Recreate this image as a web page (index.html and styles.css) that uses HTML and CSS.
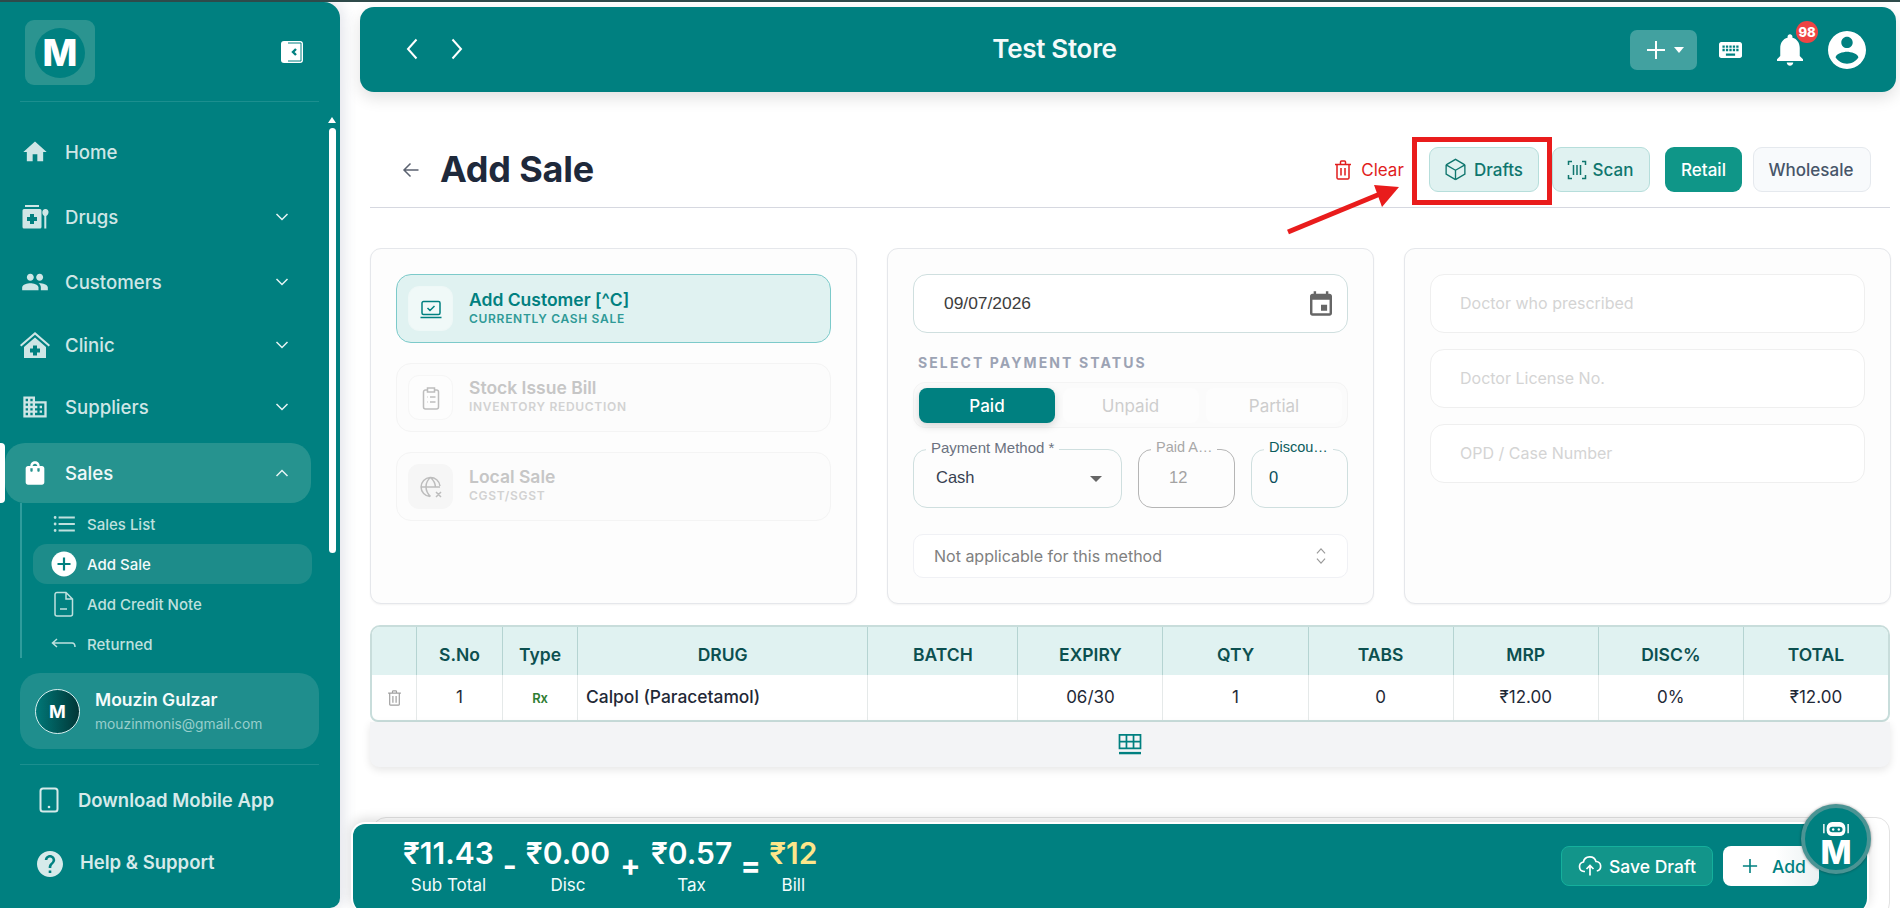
FILE: index.html
```html
<!DOCTYPE html>
<html lang="en">
<head>
<meta charset="utf-8">
<title>Add Sale</title>
<link rel="stylesheet" href="styles.css">
</head>
<body>
<div class="strip"></div>
<div class="app">
  <aside class="sidebar">
    <div class="side-head">
      <div class="logo"><span class="logo-disc">M</span></div>
      <svg class="collapse" viewBox="0 0 24 24"><rect x="1" y="1" width="22" height="22" rx="3" fill="#fff"/><path d="M8 3h13v18H8" fill="none" stroke="#008080" stroke-width="1"/><path d="M16 9l-3 3 3 3" fill="none" stroke="#008080" stroke-width="2.4"/></svg>
    </div>
    <nav class="nav">
      <a class="nav-item mb5"><svg class="nav-ic" viewBox="0 0 24 24"><path d="M10 20v-6h4v6h5v-8h3L12 3 2 12h3v8z"/></svg><span>Home</span></a>
      <a class="nav-item mb5"><svg class="nav-ic" viewBox="0 0 28 28"><path d="M4 2h14v2H4zM3 6h16a1.500 1.500 0 0 1 1.500 1.500V24a1.500 1.500 0 0 1-1.500 1.500H3A1.500 1.500 0 0 1 1.500 24V7.500A1.500 1.500 0 0 1 3 6zm6 5v3H6v4h3v3h4v-3h3v-4h-3v-3z"/><path d="M24.500 6a3 3 0 0 1 3 3.500c-.2 1.800-1.300 3-2.200 3.400V25.500h-2V12.900c-.9-.4-2-1.600-2-3.400a3.200 3.200 0 0 1 3.200-3.500z"/></svg><span>Drugs</span><svg class="chev" viewBox="0 0 14 8"><path d="M1.500 1l5.500 5.500L12.500 1"/></svg></a>
      <a class="nav-item mb3"><svg class="nav-ic" viewBox="0 0 24 24"><path d="M16 11c1.660 0 2.990-1.340 2.990-3S17.660 5 16 5c-1.660 0-3 1.340-3 3s1.340 3 3 3zm-8 0c1.660 0 2.990-1.340 2.990-3S9.660 5 8 5C6.340 5 5 6.340 5 8s1.340 3 3 3zm0 2c-2.330 0-7 1.170-7 3.500V19h14v-2.500c0-2.330-4.670-3.500-7-3.500zm8 0c-.29 0-.62.02-.97.05 1.160.84 1.970 1.970 1.970 3.450V19h6v-2.500c0-2.330-4.670-3.500-7-3.500z"/></svg><span>Customers</span><svg class="chev" viewBox="0 0 14 8"><path d="M1.500 1l5.500 5.500L12.500 1"/></svg></a>
      <a class="nav-item mb2"><svg class="nav-ic big" viewBox="0 0 30 28"><path d="M15 1L0 14l1.300 1.600L15 3.800l13.700 11.800L30 14z"/><path d="M15 6.500L4 16v11h22V16zm-2 8h4v3h3v4h-3v3h-4v-3h-3v-4h3z"/></svg><span>Clinic</span><svg class="chev" viewBox="0 0 14 8"><path d="M1.500 1l5.500 5.500L12.500 1"/></svg></a>
      <a class="nav-item"><svg class="nav-ic" viewBox="0 0 24 24"><path d="M12 7V3H2v18h20V7H12zM6 19H4v-2h2v2zm0-4H4v-2h2v2zm0-4H4V9h2v2zm0-4H4V5h2v2zm4 12H8v-2h2v2zm0-4H8v-2h2v2zm0-4H8V9h2v2zm0-4H8V5h2v2zm10 12h-8v-2h2v-2h-2v-2h2v-2h-2V9h8v10zm-2-8h-2v2h2v-2zm0 4h-2v2h2v-2z"/></svg><span>Suppliers</span><svg class="chev" viewBox="0 0 14 8"><path d="M1.500 1l5.500 5.500L12.500 1"/></svg></a>
      <a class="nav-item active mt6"><svg class="nav-ic" viewBox="0 0 24 24"><path d="M18 6h-2c0-2.210-1.790-4-4-4S8 3.790 8 6H6c-1.100 0-2 .9-2 2v12c0 1.100.9 2 2 2h12c1.100 0 2-.9 2-2V8c0-1.100-.9-2-2-2zm-8 4c0 .55-.45 1-1 1s-1-.45-1-1V8h2v2zm2-6c1.100 0 2 .9 2 2h-4c0-1.100.9-2 2-2zm4 6c0 .55-.45 1-1 1s-1-.45-1-1V8h2v2z"/></svg><span>Sales</span><svg class="chev" viewBox="0 0 14 8"><path d="M1.500 7L7 1.500 12.500 7"/></svg></a>
      <div class="submenu">
        <a class="sub-item"><svg class="sub-ic" viewBox="0 0 24 24"><path d="M2.500 6a1.300 1.300 0 1 0 2.600 0 1.300 1.300 0 0 0-2.600 0zm0 6a1.300 1.300 0 1 0 2.600 0 1.300 1.300 0 0 0-2.600 0zm0 6a1.300 1.300 0 1 0 2.600 0 1.300 1.300 0 0 0-2.600 0zM7 19h15v-2H7zm0-6h15v-2H7zm0-8v2h15V5z"/></svg><span>Sales List</span></a>
        <a class="sub-item current"><svg class="sub-ic" viewBox="0 0 26 26"><circle cx="13" cy="13" r="12.500" fill="#fff"/><path d="M13 6.500v13M6.500 13h13" stroke="#008080" stroke-width="2.200"/></svg><span>Add Sale</span></a>
        <a class="sub-item"><svg class="sub-ic line" viewBox="0 0 26 26"><path d="M6 1.500h9l6.500 6.500v15a2 2 0 0 1-2 2H6a2 2 0 0 1-2-2v-19.500a2 2 0 0 1 2-2zM15 1.500V8h6.500M9 18h7"/></svg><span>Add Credit Note</span></a>
        <a class="sub-item"><svg class="sub-ic line" viewBox="0 0 26 26"><path d="M6 8l-4.500 4L6 16M2 12h19c1.500 0 3 1.500 3 4"/></svg><span>Returned</span></a>
      </div>
    </nav>
    <div class="user-card">
      <div class="avatar">M</div>
      <div class="user-text"><div class="user-name">Mouzin Gulzar</div><div class="user-mail">mouzinmonis@gmail.com</div></div>
    </div>
    <div class="side-rule"></div>
    <a class="foot-item first"><svg class="foot-ic" viewBox="0 0 20 26"><rect x="1.500" y="1.500" width="17" height="23" rx="2.500" fill="none" stroke="currentColor" stroke-width="2"/><circle cx="10" cy="20" r="1.300" fill="currentColor"/></svg><span>Download Mobile App</span></a>
    <a class="foot-item second"><svg class="foot-ic help" viewBox="2 2 20 20"><path fill="currentColor" d="M12 2C6.480 2 2 6.480 2 12s4.480 10 10 10 10-4.480 10-10S17.520 2 12 2zm1 17h-2v-2h2v2zm2.070-7.750l-.9.92C13.450 12.900 13 13.500 13 15h-2v-.5c0-1.100.45-2.100 1.170-2.830l1.240-1.260c.37-.36.59-.86.59-1.410 0-1.100-.9-2-2-2s-2 .9-2 2H8c0-2.210 1.790-4 4-4s4 1.790 4 4c0 .88-.36 1.680-.93 2.250z"/></svg><span>Help &amp; Support</span></a>
    <div class="scroll-arrow"></div>
    <div class="scroll-thumb"></div>
    <div class="active-mark"></div>
  </aside>

  <main class="main">
    <header class="topbar">
      <div class="history">
        <svg class="hist-ic" viewBox="0 0 14 22"><path d="M11.500 1.500L3 11l8.500 9.500"/></svg>
        <svg class="hist-ic" viewBox="0 0 14 22"><path d="M2.500 1.500L11 11l-8.500 9.500"/></svg>
      </div>
      <div class="store">Test Store</div>
      <div class="top-actions">
        <div class="plus-btn"><svg class="plus-ic" viewBox="0 0 20 20"><path d="M10 1v18M1 10h18"/></svg><span class="caret"></span></div>
        <svg class="kbd" viewBox="2 5 20 14"><path fill="#fff" d="M20 5H4c-1.100 0-1.990.9-1.990 2L2 17c0 1.100.9 2 2 2h16c1.100 0 2-.9 2-2V7c0-1.100-.9-2-2-2zm-9 3h2v2h-2V8zm0 3h2v2h-2v-2zM8 8h2v2H8V8zm0 3h2v2H8v-2zm-1 2H5v-2h2v2zm0-3H5V8h2v2zm9 7H8v-2h8v2zm0-4h-2v-2h2v2zm0-3h-2V8h2v2zm3 3h-2v-2h2v2zm0-3h-2V8h2v2z"/></svg>
        <div class="bell-wrap">
          <svg class="bell" viewBox="4 2.500 16 19.500"><path fill="#fff" d="M12 22c1.100 0 2-.9 2-2h-4c0 1.100.89 2 2 2zm6-6v-5c0-3.070-1.640-5.640-4.500-6.320V4c0-.83-.67-1.500-1.500-1.500s-1.500.67-1.500 1.500v.68C7.630 5.360 6 7.920 6 11v5l-2 2v1h16v-1l-2-2z"/></svg>
          <span class="badge">98</span>
        </div>
        <svg class="account" viewBox="2 2 20 20"><path fill="#fff" d="M12 2C6.480 2 2 6.480 2 12s4.480 10 10 10 10-4.480 10-10S17.520 2 12 2zm0 3c1.660 0 3 1.340 3 3s-1.340 3-3 3-3-1.340-3-3 1.340-3 3-3zm0 14.200c-2.500 0-4.710-1.280-6-3.220.03-1.990 4-3.080 6-3.080 1.990 0 5.970 1.090 6 3.080-1.290 1.940-3.500 3.220-6 3.220z"/></svg>
      </div>
    </header>

    <section class="title-row">
      <svg class="back" viewBox="0 0 18 18"><path d="M16.500 9H2M8.500 2.500L2 9l6.500 6.500"/></svg>
      <h1 class="page-title">Add Sale</h1>
      <div class="title-actions">
        <button class="clear"><svg class="act-ic" viewBox="0 0 18 20"><path d="M1 4.500h16M6.500 4.500V2a1 1 0 0 1 1-1h3a1 1 0 0 1 1 1v2.500M3 4.500V18a1.200 1.200 0 0 0 1.200 1h9.600A1.200 1.200 0 0 0 15 18V4.500M7 8v7.500M11 8v7.500"/></svg>Clear</button>
        <button class="tint drafts"><svg class="act-ic cube" viewBox="0 0 24 24"><path d="M21 7.500l-9-5.250L3 7.500m18 0l-9 5.250m9-5.250v9l-9 5.250M3 7.500l9 5.250M3 7.500v9l9 5.250m0-9v9"/></svg>Drafts</button>
        <button class="tint scan"><svg class="act-ic" viewBox="0 0 20 20"><path d="M1.500 5V1.500H5M15 1.500h3.500V5M1.500 15v3.500H5M15 18.500h3.500V15M6.500 5v10M10 5v10M13.500 5v10"/></svg>Scan</button>
        <button class="retail">Retail</button>
        <button class="wholesale">Wholesale</button>
      </div>
    </section>

    <section class="cards">
      <div class="card">
        <div class="option selected">
          <span class="opt-ic"><svg viewBox="0 0 24 24"><path d="M4.500 4.500h15a1.500 1.500 0 0 1 1.500 1.500v10a1.500 1.500 0 0 1-1.500 1.500h-15A1.500 1.500 0 0 1 3 16V6a1.500 1.500 0 0 1 1.500-1.500zM1.500 20.500h21M8.500 11l2.500 2.500 4.500-4.500"/></svg></span>
          <span class="opt-text"><b>Add Customer [^C]</b><small>CURRENTLY CASH SALE</small></span>
        </div>
        <div class="option off">
          <span class="opt-ic"><svg viewBox="0 0 24 24"><path d="M8.500 4H6.500A2 2 0 0 0 4.500 6v15a2 2 0 0 0 2 2h11a2 2 0 0 0 2-2V6a2 2 0 0 0-2-2h-2M8.500 2h7v4h-7zM8 11h.5M11 11h5.500M8 16h.5M11 16h5.500"/></svg></span>
          <span class="opt-text"><b>Stock Issue Bill</b><small>INVENTORY REDUCTION</small></span>
        </div>
        <div class="option off grey">
          <span class="opt-ic"><svg viewBox="0 0 24 24"><path d="M21 11a9.500 9.500 0 1 0-10 10.500M2 12h19M11.500 2.500c-6 5-6 13 0 19M11.500 2.500c3.500 3 4.800 6.500 5 9.500M17 17l5 5M22 17l-5 5"/></svg></span>
          <span class="opt-text"><b>Local Sale</b><small>CGST/SGST</small></span>
        </div>
      </div>

      <div class="card">
        <div class="date-field"><span>09/07/2026</span><svg class="cal" viewBox="3 1 18 20"><path fill="#666" d="M17 12h-5v5h5v-5zM16 1v2H8V1H6v2H5c-1.110 0-1.990.9-1.990 2L3 19c0 1.100.89 2 2 2h14c1.100 0 2-.9 2-2V5c0-1.100-.9-2-2-2h-1V1h-2zm3 18H5V8h14v11z"/></svg></div>
        <div class="status-label">SELECT PAYMENT STATUS</div>
        <div class="segment">
          <span class="seg on">Paid</span><span class="seg">Unpaid</span><span class="seg">Partial</span>
        </div>
        <div class="field-row">
          <div class="field method"><span class="legend">Payment Method *</span><span class="value">Cash</span><span class="drop"></span></div>
          <div class="field paid"><span class="legend soft">Paid A…</span><span class="value dim">12</span></div>
          <div class="field disc"><span class="legend dark">Discou…</span><span class="value teal">0</span></div>
        </div>
        <div class="na-select"><span>Not applicable for this method</span><svg class="updown" viewBox="0 0 12 20"><path d="M1.500 7L6 2l4.500 5M1.500 13L6 18l4.500-5"/></svg></div>
      </div>

      <div class="card">
        <div class="ghost">Doctor who prescribed</div>
        <div class="ghost">Doctor License No.</div>
        <div class="ghost">OPD / Case Number</div>
      </div>
    </section>

    <section class="grid-wrap">
      <table class="items">
        <colgroup><col class="c-a"><col class="c-b"><col class="c-c"><col class="c-d"><col class="c-e"><col class="c-f"><col class="c-f"><col class="c-f"><col class="c-f"><col class="c-f"><col class="c-f"></colgroup>
        <thead><tr><th></th><th>S.No</th><th>Type</th><th>DRUG</th><th>BATCH</th><th>EXPIRY</th><th>QTY</th><th>TABS</th><th>MRP</th><th>DISC%</th><th>TOTAL</th></tr></thead>
        <tbody><tr>
          <td><svg class="row-del" viewBox="0 0 18 20"><path d="M1 4h16M6.500 4V2a1 1 0 0 1 1-1h3a1 1 0 0 1 1 1v2M3 4v14a1.200 1.200 0 0 0 1.200 1h9.600a1.200 1.200 0 0 0 1.200-1V4M7 7.500V16M11 7.500V16"/></svg></td>
          <td>1</td><td><span class="rx">Rx</span></td><td class="left">Calpol (Paracetamol)</td><td></td><td>06/30</td><td>1</td><td>0</td><td>₹12.00</td><td>0%</td><td>₹12.00</td>
        </tr></tbody>
      </table>
      <div class="grid-tools"><svg class="tool-ic" viewBox="0 0 24 22"><path d="M1 1h22v14H1zM1 8h22M8.300 1v14M15.700 1v14"/><path class="thick" d="M0.500 20h23"/></svg></div>
    </section>
    <div class="back-card"></div>

    <div class="summary">
      <div class="totals">
        <div class="tot"><strong>₹11.43</strong><span>Sub Total</span></div>
        <i class="op narrow">-</i>
        <div class="tot"><strong>₹0.00</strong><span>Disc</span></div>
        <i class="op wide">+</i>
        <div class="tot"><strong>₹0.57</strong><span>Tax</span></div>
        <i class="op">=</i>
        <div class="tot"><strong class="gold">₹12</strong><span>Bill</span></div>
      </div>
      <div class="sum-actions">
        <button class="save"><svg class="save-ic" viewBox="0 0 24 22"><path d="M7 16.500H6a4.800 4.800 0 0 1-.6-9.500A6.500 6.500 0 0 1 18 6.500a4.800 4.800 0 0 1 .8 9.500M12 20.500V11M8.500 14l3.500-3.500 3.500 3.500"/></svg>Save Draft</button>
        <button class="add"><svg class="add-ic" viewBox="0 0 18 18"><path d="M9 1v16M1 9h16"/></svg>Add</button>
      </div>
    </div>

    <div class="bot">
      <svg class="bot-head" viewBox="0 0 30 20"><path d="M2 4v10M28 4v10" stroke="#fff" stroke-width="1.500" fill="none"/><rect x="5" y="2" width="20" height="15" rx="6" fill="#fff"/><rect x="8" y="7" width="14" height="6" rx="3" fill="#008080"/><circle cx="12" cy="10" r="1.300" fill="#fff"/><circle cx="18" cy="10" r="1.300" fill="#fff"/></svg>
      <span class="bot-m">M</span>
    </div>

    <div class="callout"></div>
    <svg class="pointer" viewBox="0 0 120 55"><path d="M2 52L94 14" stroke="#e91c1c" stroke-width="5" fill="none"/><path d="M113 7L88 5l8 22z" fill="#e91c1c"/></svg>
  </main>
</div>
</body>
</html>
```
FILE: styles.css
```css
* { box-sizing: border-box; }
html, body { margin: 0; padding: 0; height: 908px; overflow: hidden; background: #fff; }
body { font-family: Inter, "Noto Sans", sans-serif; color: #1f2937; }
a { display: flex; }
button { font-family: inherit; cursor: pointer; }

.strip { height: 2px; background: #2e4a4a; }
.app { display: flex; height: 906px; position: relative; overflow: hidden; }

/* sidebar */
.sidebar { width: 340px; flex: none; height: 906px; background: #008080; border-radius: 0 16px 10px 0; position: relative; box-shadow: 4px 0 14px rgba(60,70,110,.14); z-index: 3; }
.side-head { height: 100px; margin: 0 21px 0 20px; padding: 18px 15px 0 5px; display: flex; justify-content: space-between; align-items: flex-start; border-bottom: 1px solid #1c8f8f; }
.logo { width: 70px; height: 65px; border-radius: 9px; background: #2b9490; display: flex; align-items: center; justify-content: center; }
.logo-disc { width: 50px; height: 50px; border-radius: 50%; background: #008080; color: #fff; font-size: 37px; font-weight: 800; line-height: 50px; text-align: center; }
.collapse { width: 24px; height: 24px; margin-top: 20px; }
.nav { margin-top: 20px; }
.nav-item { height: 60px; margin: 0 29px 0 5px; padding: 0 22px 0 15px; align-items: center; color: #cfe6e6; fill: #cfe6e6; font-size: 18.600px; font-weight: 500; border-radius: 20px; }
.nav-item span { margin-left: 15px; flex: 1; }
.mb5 { margin-bottom: 5px; }
.mb3 { margin-bottom: 3px; }
.mb2 { margin-bottom: 2px; }
.mt6 { margin-top: 6px; }
.nav-ic { width: 30px; height: 28px; flex: none; }
.nav-ic.big { height: 30px; }
.chev { width: 14px; height: 8px; fill: none; stroke: #e6f3f3; stroke-width: 1.500; flex: none; }
.nav-item.active { background: #26938f; color: #f0f8f8; fill: #fff; }
.submenu { height: 155px; margin-left: 20px; padding: 1px 0 0 11px; border-left: 2px solid #2f9c9c; }
.sub-item { height: 40px; width: 279px; padding-left: 18px; align-items: center; border-radius: 14px; color: #bfe0de; fill: #bfe0de; font-size: 15px; font-weight: 500; }
.sub-item span { margin-left: 10px; }
.sub-ic { width: 26px; height: 26px; flex: none; }
.sub-ic.line { fill: none; stroke: #bfe0de; stroke-width: 1.500; }
.sub-item.current { background: #1d8c8a; color: #f2fafa; fill: #fff; }
.user-card { height: 76px; margin: 15px 21px 0 20px; padding: 0 15px; border-radius: 20px; background: #1f8e8d; display: flex; align-items: center; gap: 15px; }
.avatar { width: 45px; height: 45px; flex: none; border-radius: 50%; border: 1px solid #d7eeee; background: linear-gradient(90deg, #007878, #013636); color: #fff; font-size: 18px; font-weight: 700; display: flex; align-items: center; justify-content: center; }
.user-name { font-size: 17.500px; font-weight: 600; color: #f5fbfb; line-height: 24px; }
.user-mail { font-size: 13.800px; color: #98cfcc; line-height: 20px; margin-top: 2px; }
.side-rule { height: 1px; margin: 15px 21px 0 20px; background: #1c8f8f; }
.foot-item { align-items: center; color: #d6eaea; font-size: 18.500px; font-weight: 600; }
.foot-item.first { height: 30px; margin-top: 20px; padding-left: 39px; gap: 19px; }
.foot-item.second { height: 30px; margin-top: 32px; padding-left: 37px; gap: 17px; }
.foot-ic { width: 20px; height: 26px; flex: none; }
.foot-ic.help { width: 26px; height: 26px; margin-top: 4px; }
.scroll-arrow { position: absolute; top: 115px; left: 328px; width: 0; height: 0; border: 4.500px solid transparent; border-top: 0; border-bottom: 6px solid #fff; }
.scroll-thumb { position: absolute; top: 126px; left: 329px; width: 7px; height: 425px; border-radius: 4px; background: #fff; }
.active-mark { position: absolute; top: 441px; left: 0; width: 5px; height: 60px; background: #fff; border-radius: 0 4px 4px 0; }

/* main column */
.main { flex: 1; min-width: 0; position: relative; }
.topbar { height: 85px; margin: 5px 4px 0 20px; padding: 0 30px 0 45px; background: #008080; border-radius: 14px; display: flex; justify-content: space-between; align-items: center; box-shadow: 0 6px 16px rgba(0,0,0,.12); }
.history { width: 71px; display: flex; gap: 31px; margin-top: -2px; }
.hist-ic { width: 14px; height: 22px; fill: none; stroke: #fff; stroke-width: 2; }
.store { color: #f4fafa; font-size: 26px; font-weight: 600; letter-spacing: -.3px; margin: -2px 0 0 3px; }
.top-actions { width: 236px; display: flex; align-items: center; }
.plus-btn { width: 67px; height: 40px; border-radius: 7px; background: #42a1a0; display: flex; align-items: center; padding-left: 16px; gap: 8px; }
.plus-ic { width: 20px; height: 20px; stroke: #fff; stroke-width: 2; fill: none; }
.caret { width: 0; height: 0; border: 5px solid transparent; border-top: 6px solid #fff; border-bottom: 0; }
.kbd { width: 23px; height: 18px; margin-left: 22px; }
.bell-wrap { position: relative; margin-left: 35px; width: 26px; height: 36px; display: flex; align-items: center; }
.bell { width: 26px; height: 36px; }
.badge { position: absolute; top: -11px; left: 19px; width: 22px; height: 22px; border-radius: 50%; background: #ef4444; color: #fff; font-size: 13px; font-weight: 800; line-height: 22px; text-align: center; }
.account { width: 38px; height: 38px; margin-left: 25px; }

.title-row { height: 61px; margin: 55px 10px 0 30px; padding-bottom: 15px; display: flex; align-items: center; border-bottom: 1px solid #d6d8e0; }
.back { width: 18px; height: 18px; margin-left: 32px; fill: none; stroke: #5b6270; stroke-width: 1.500; flex: none; }
.page-title { margin: -1px 0 0 20px; font-size: 36px; font-weight: 700; color: #1e293b; letter-spacing: -.2px; }
.title-actions { margin-left: auto; display: flex; align-items: center; margin-right: 19px; }
.title-actions button { height: 45px; border-radius: 9px; font-size: 17px; font-weight: 500; display: flex; align-items: center; justify-content: center; border: 1px solid transparent; padding: 0; }
.act-ic { width: 20px; height: 20px; fill: none; stroke: currentColor; stroke-width: 1.500; flex: none; }
.act-ic.cube { width: 25px; height: 25px; stroke-width: 1.300; }
.clear { background: none; color: #e11d1d; gap: 9px; width: 70px; margin-right: 25px; font-weight: 400 !important; }
.clear .act-ic { width: 18px; height: 20px; }
.tint { background: #e0f2f1; color: #0f766e; border-color: #b6dedb !important; gap: 6px; }
.drafts { width: 110px; margin-right: 13px; padding-right: 2px !important; }
.scan { width: 98px; margin-right: 15px; padding-right: 2px !important; }
.retail { width: 77px; background: #0f9688; color: #fff; margin-right: 11px; }
.wholesale { width: 118px; background: #f8fafc; color: #475569; border-color: #e5e9ee !important; padding-right: 2px !important; }

.cards { margin: 40px 9px 0 30px; display: grid; grid-template-columns: repeat(3, 487px); gap: 30px; }
.card { height: 356px; padding: 25px; background: #fdfdfd; border: 1px solid #e5e7eb; border-radius: 11px; box-shadow: 0 1px 2px rgba(0,0,0,.05); }
.option { height: 69px; margin-bottom: 20px; padding: 0 11px; border: 1px solid #f4f4f4; border-radius: 15px; display: flex; align-items: center; gap: 16px; background: #fcfcfc; }
.opt-ic { width: 45px; height: 45px; flex: none; border-radius: 11px; border: 1px solid #f6f6f6; background: #fdfdfd; display: flex; align-items: center; justify-content: center; }
.opt-ic svg { width: 24px; height: 24px; fill: none; stroke: #bdbdbd; stroke-width: 1.500; }
.opt-text { display: flex; flex-direction: column; margin-top: -2px; }
.off .opt-text { margin-top: -4px; }
.opt-text b { font-size: 17.500px; font-weight: 600; line-height: 21px; color: #c6c6c6; }
.opt-text small { font-size: 12px; font-weight: 600; line-height: 17px; color: #d2d2d2; letter-spacing: .7px; }
.option.selected { background: #e0f2f1; border-color: #7ccaca; }
.selected .opt-ic { background: #f0f9f8; border-color: #eef8f7; }
.selected .opt-ic svg { stroke: #008080; }
.selected b { color: #008080; }
.selected small { color: #2f9a97; }
.grey .opt-ic { background: #f6f6f6; }

.date-field { height: 59px; padding: 0 15px 0 30px; border: 1px solid #cfdfdf; border-radius: 14px; background: #fff; display: flex; align-items: center; justify-content: space-between; font: 17.400px "Liberation Sans", Arial, sans-serif; color: #3d3d3d; }
.cal { width: 22px; height: 25px; }
.status-label { height: 16px; margin: 22px 0 0 5px; font-size: 14px; line-height: 16px; font-weight: 700; letter-spacing: 2.100px; color: #9ca3b4; white-space: nowrap; }
.segment { height: 46px; margin-top: 11px; padding: 5px; border: 1px solid #f4f4f4; border-radius: 12px; background: #fbfbfb; display: grid; grid-template-columns: repeat(3, 136px); gap: 7.500px; }
.seg { height: 35px; border-radius: 8px; background: #fdfdfd; color: #cdcdcd; font: 17px/36px Inter, sans-serif; text-align: center; }
.seg.on { background: #008080; color: #fff; font-weight: 500; box-shadow: 0 3px 8px rgba(0,0,0,.15); }
.field-row { margin-top: 21px; display: grid; grid-template-columns: 209px 97px 97px; gap: 16px; }
.field { height: 59px; position: relative; border: 1px solid #cfdfdf; border-radius: 14px; background: #fdfdfd; display: flex; align-items: center; }
.field.paid { border-color: #b5b5b5; }
.legend { position: absolute; top: -11px; left: 12px; padding: 0 5px; background: #fdfdfd; font: 15px/17px "Liberation Sans", Arial, sans-serif; color: #6b7280; white-space: nowrap; }
.legend.soft { color: #a8a8a8; font-size: 14.500px; }
.legend.dark { color: #0b5c5c; font-size: 14.500px; }
.value { margin: -2px 0 0 22px; font: 16.500px "Liberation Sans", Arial, sans-serif; color: #374151; }
.value.dim { margin-left: 30px; color: #a3a3a3; }
.value.teal { margin-left: 17px; color: #0b4f5c; }
.drop { position: absolute; right: 19px; top: 26px; width: 0; height: 0; border: 6px solid transparent; border-top: 6px solid #666; border-bottom: 0; }
.na-select { height: 44px; margin-top: 26px; padding: 0 20px; border: 1px solid #f0f1f5; border-radius: 10px; background: #fff; display: flex; align-items: center; justify-content: space-between; font-size: 16px; color: #808080; }
.updown { width: 12px; height: 18px; fill: none; stroke: #9a9a9a; stroke-width: 1.300; }
.ghost { height: 59px; margin-bottom: 16px; padding-left: 29px; border: 1px solid #efefef; border-radius: 14px; background: #fff; font: 16px/57px Inter, sans-serif; color: #d4d4d4; }

.grid-wrap { margin: 21px 10px 0 30px; }
.items { width: 1520px; height: 97px; table-layout: fixed; border-collapse: separate; border-spacing: 0; border: 2.500px solid #c8dddb; border-radius: 10px 10px 8px 8px; overflow: hidden; background: #fff; font-size: 17px; }
.c-a { width: 44px; } .c-b { width: 86px; } .c-c { width: 75px; } .c-d { width: 290px; } .c-e { width: 150px; } .c-f { width: 145px; }
.items th { height: 48px; padding: 6px 0 0; background: #e0f2f1; color: #0c5050; font-size: 17.500px; font-weight: 600; border-left: 1px solid #b5d4d2; }
.items td { height: 44px; padding: 0 0 2px; text-align: center; color: #1f2937; border-left: 1px solid #e5e9e9; }
.items th:first-child, .items td:first-child { border-left: 0; }
.items td.left { text-align: left; padding-left: 8px; font-weight: 500; font-size: 17.400px; }
.rx { color: #2e7d32; font-size: 13px; font-weight: 600; }
.row-del { width: 15px; height: 16px; fill: none; stroke: #a0a0a0; stroke-width: 1.500; vertical-align: middle; }
.grid-tools { height: 45px; background: #f3f4f6; border-radius: 0 0 9px 9px; box-shadow: 0 3px 8px rgba(0,0,0,.1); display: flex; align-items: center; justify-content: center; padding-right: 1px; }
.tool-ic { width: 24px; height: 21px; fill: none; stroke: #008080; stroke-width: 1.800; }
.tool-ic .thick { stroke-width: 2.500; }
.back-card { height: 100px; margin: 50px 10px 0 32px; border: 1px solid #e2e2e2; border-radius: 14px; background: #fff; }

/* overlays */
.summary { position: absolute; left: 11px; top: 820px; width: 1518px; height: 90px; padding: 0 48px 8px 50px; background: #008080; border: 2px solid #fff; border-bottom: 0; border-radius: 14px; display: flex; justify-content: space-between; align-items: center; box-shadow: 0 -3px 12px rgba(0,0,0,.14); z-index: 4; }
.totals { display: flex; align-items: center; }
.tot { display: flex; flex-direction: column; align-items: center; color: #fff; }
.tot strong { font-size: 30px; font-weight: 600; line-height: 42px; }
.tot strong.gold { color: #fde68a; font-weight: 600; }
.tot span { font-size: 17px; line-height: 22px; color: #f2fbfb; }
.op { font-style: normal; font-size: 30px; font-weight: 700; color: #fff; width: 37px; text-align: center; padding-top: 2px; }
.op.narrow { width: 32px; }
.op.wide { width: 41px; }
.sum-actions { display: flex; gap: 10px; margin-top: 4px; }
.sum-actions button { height: 40px; border-radius: 8px; font-size: 17.500px; font-weight: 500; display: flex; align-items: center; justify-content: center; }
.save { width: 152px; gap: 7px; background: #12958a; border: 1px solid #15b09c; color: #fff; }
.save-ic { width: 24px; height: 22px; fill: none; stroke: #fff; stroke-width: 1.700; }
.add { width: 96px; gap: 14px; padding: 0 0 0 19px; border: 0; background: linear-gradient(90deg, #fff 55%, #eaf1f2); color: #008080; justify-content: flex-start !important; }
.add-ic { width: 16px; height: 16px; fill: none; stroke: #008080; stroke-width: 1.800; }
.bot { position: absolute; left: 1461px; top: 802px; width: 70px; height: 70px; border-radius: 50%; background: #008080; border: 4px solid #4b9494; box-shadow: 0 0 3px rgba(0,0,0,.4); display: flex; flex-direction: column; align-items: center; z-index: 5; }
.bot-head { width: 28px; height: 19px; margin-top: 12px; flex: none; }
.bot-m { color: #fff; font-size: 33px; font-weight: 800; line-height: 26px; }
.callout { position: absolute; left: 1072px; top: 135px; width: 140px; height: 68px; border: 5px solid #e91c1c; z-index: 2; }
.pointer { position: absolute; left: 946px; top: 178px; width: 120px; height: 55px; z-index: 2; }
```
